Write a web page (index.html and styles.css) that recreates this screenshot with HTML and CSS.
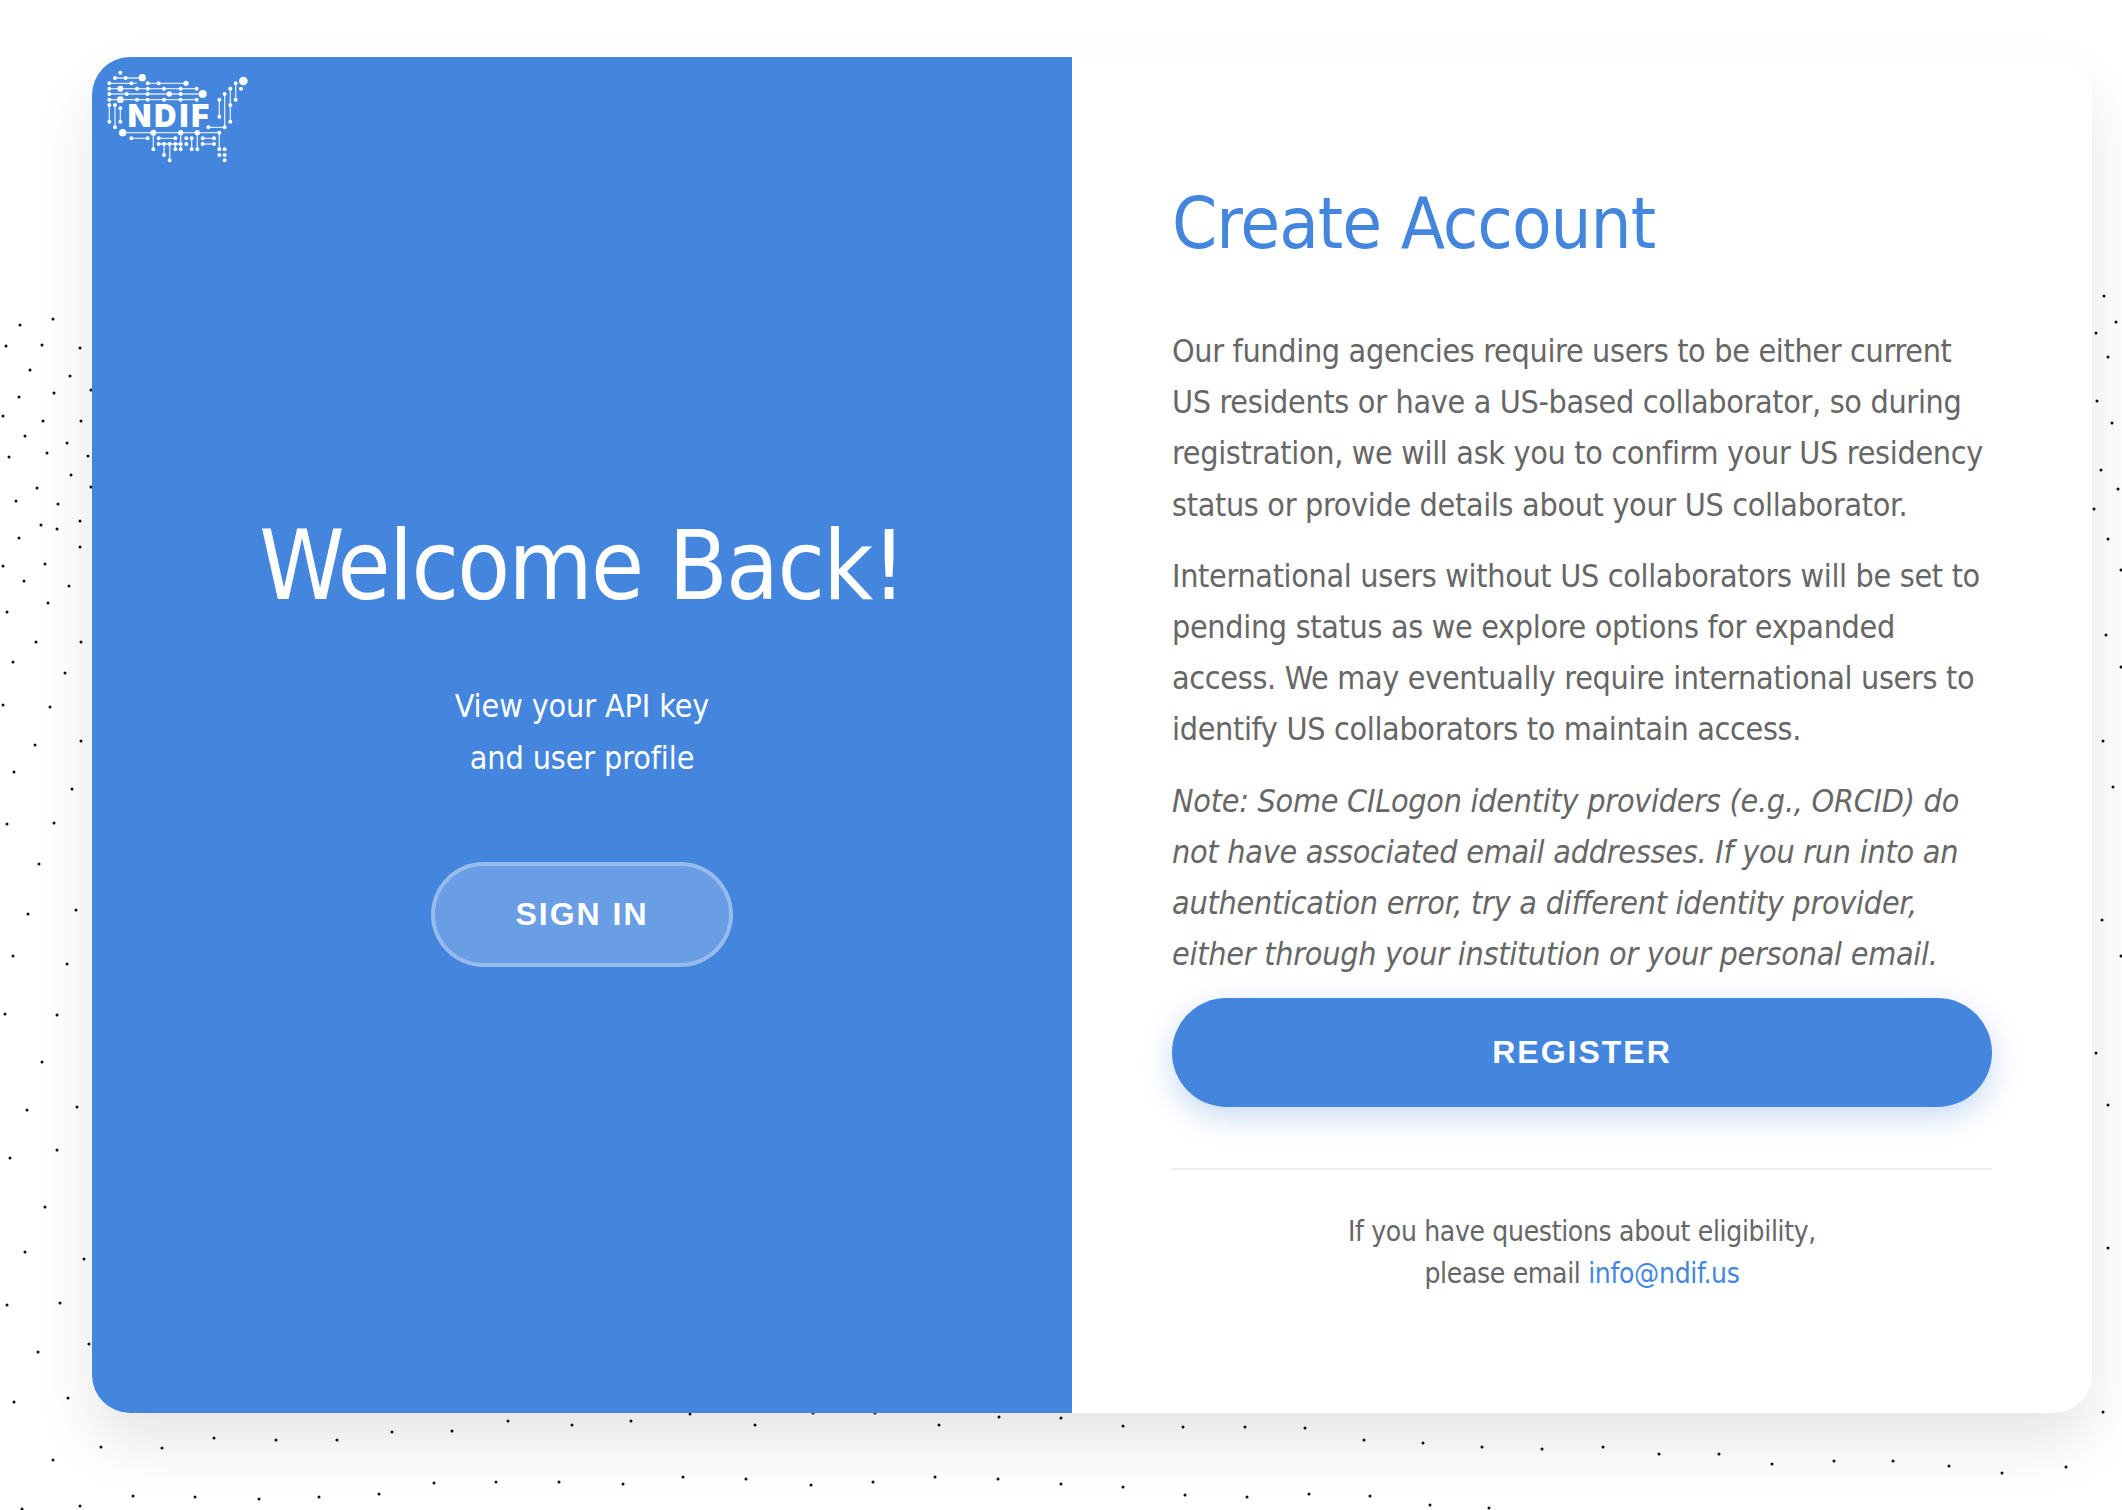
FILE: index.html
```html
<!DOCTYPE html>
<html lang="en">
<head>
<meta charset="utf-8">
<title>NDIF Login</title>
<link rel="stylesheet" href="styles.css">
</head>
<body>
<div class="stage">
  <svg class="particles" width="2122" height="1510" viewBox="0 0 2122 1510" aria-hidden="true">
    <path class="dots" d="M53 319h.01M20 325h.01M6 346h.01M42 345h.01M80 348h.01M30 370h.01M70 376h.01M19 397h.01M54 393h.01M91 390h.01M3 416h.01M43 421h.01M81 421h.01M25 436h.01M67 443h.01M9 457h.01M47 453h.01M88 456h.01M71 475h.01M37 488h.01M91 487h.01M16 501h.01M58 504h.01M80 521h.01M41 525h.01M57 529h.01M19 538h.01M80 547h.01M45 564h.01M3 566h.01M24 581h.01M69 586h.01M48 603h.01M7 612h.01M36 642h.01M81 642h.01M13 662h.01M65 673h.01M3 705h.01M50 707h.01M35 745h.01M81 741h.01M14 772h.01M72 789h.01M7 824h.01M54 823h.01M39 864h.01M76 910h.01M28 914h.01M13 956h.01M67 964h.01M5 1014h.01M57 1015h.01M42 1062h.01M77 1107h.01M27 1110h.01M57 1150h.01M10 1158h.01M45 1207h.01M25 1252h.01M84 1259h.01M60 1303h.01M7 1305h.01M38 1352h.01M89 1344h.01M14 1402h.01M68 1398h.01M101 1447h.01M53 1460h.01M162 1448h.01M214 1438h.01M276 1440h.01M337 1440h.01M392 1432h.01M452 1431h.01M508 1421h.01M572 1425h.01M631 1421h.01M690 1414h.01M133 1496h.01M195 1497h.01M259 1499h.01M319 1497h.01M379 1494h.01M434 1483h.01M496 1482h.01M559 1482h.01M623 1484h.01M683 1477h.01M22 1509h.01M80 1506h.01M755 1425h.01M813 1413h.01M875 1413h.01M939 1425h.01M999 1417h.01M1061 1418h.01M1123 1426h.01M1183 1427h.01M1245 1427h.01M1305 1428h.01M1364 1440h.01M746 1479h.01M811 1485h.01M873 1482h.01M935 1477h.01M998 1479h.01M1061 1484h.01M1123 1487h.01M1185 1495h.01M1247 1497h.01M1309 1494h.01M1370 1496h.01M1423 1443h.01M1482 1447h.01M1542 1449h.01M1603 1447h.01M1659 1454h.01M1719 1454h.01M1772 1464h.01M1834 1461h.01M1893 1461h.01M1949 1466h.01M2002 1473h.01M2066 1467h.01M2103 1412h.01M1430 1505h.01M1489 1508h.01M2104 296h.01M2116 322h.01M2096 333h.01M2108 357h.01M2097 401h.01M2112 423h.01M2101 470h.01M2118 489h.01M2094 509h.01M2108 539h.01M2121 570h.01M2106 635h.01M2121 667h.01M2103 741h.01M2113 787h.01M2102 920h.01M2121 956h.01M2096 1053h.01M2108 1105h.01M2108 1248h.01"/>
  </svg>

  <main class="card">
    <section class="panel-left">
      <svg class="logo" width="145" height="97" viewBox="45 54 435 291" role="img" aria-label="NDIF logo">
        <g class="logo-lines">
          <path d="M75 84H157M58 100H140M173 100H288M58 116H320M58 132H338M58 149H320"/>
          <path d="M58 165V215M75 165V232M91 175V215"/>
          <path d="M437 100V149M421 116V215M404 132V232M388 149V200M355 232H404"/>
          <path d="M98 248H388M124 265H173M190 248V298M206 265H256M206 282H272M222 282V315M239 282V331M256 282V298M272 248V298M305 265V298M322 248V298M338 265H372M338 282H372M388 248V298"/>
        </g>
        <path class="logo-dots" d="M91 68h.01M75 84h.01M107 84h.01M58 100h.01M124 100h.01M173 100h.01M206 100h.01M58 116h.01M141 116h.01M173 116h.01M222 116h.01M272 116h.01M320 116h.01M58 132h.01M110 132h.01M173 132h.01M272 132h.01M58 149h.01M141 149h.01M173 149h.01M222 149h.01M272 149h.01M320 149h.01M58 165h.01M58 215h.01M75 165h.01M75 232h.01M91 175h.01M91 215h.01M453 116h.01M437 100h.01M437 149h.01M421 116h.01M421 165h.01M421 215h.01M404 132h.01M404 232h.01M388 149h.01M388 200h.01M355 232h.01M388 248h.01M124 265h.01M173 265h.01M190 298h.01M206 265h.01M256 265h.01M206 282h.01M222 282h.01M239 282h.01M256 282h.01M272 282h.01M222 315h.01M239 331h.01M256 298h.01M272 298h.01M289 265h.01M289 282h.01M305 265h.01M305 298h.01M322 298h.01M338 265h.01M372 265h.01M338 282h.01M372 282h.01M388 298h.01M404 298h.01M388 315h.01M404 315h.01M404 331h.01"/>
        <g class="logo-nodes">
          <circle cx="157" cy="83" r="11"/><circle cx="288" cy="100" r="8"/><circle cx="91" cy="116" r="9"/>
          <circle cx="238" cy="132" r="8"/><circle cx="338" cy="132" r="12"/><circle cx="91" cy="149" r="10"/>
          <circle cx="460" cy="93" r="13"/><circle cx="98" cy="248" r="11"/><circle cx="190" cy="248" r="9"/>
          <circle cx="272" cy="248" r="8"/><circle cx="322" cy="248" r="8"/>
        </g>
        <text class="logo-text" x="240" y="232" text-anchor="middle">NDIF</text>
      </svg>
      <h1 class="welcome">Welcome Back!</h1>
      <p class="welcome-sub">View your API key<br>and user profile</p>
      <button class="btn btn-ghost" type="button">SIGN IN</button>
    </section>

    <section class="panel-right">
      <h2 class="title">Create Account</h2>
      <p class="copy">Our funding agencies require users to be either current US residents or have a US-based collaborator, so during registration, we will ask you to confirm your US residency status or provide details about your US collaborator.</p>
      <p class="copy">International users without US collaborators will be set to pending status as we explore options for expanded access. We may eventually require international users to identify US collaborators to maintain access.</p>
      <p class="copy copy-note">Note: Some CILogon identity providers (e.g., ORCID) do not have associated email addresses. If you run into an authentication error, try a different identity provider, either through your institution or your personal email.</p>
      <button class="btn btn-solid" type="button">REGISTER</button>
      <div class="help">
        <p class="help-text">If you have questions about eligibility,<br>please email <a class="help-link" href="#">info@ndif.us</a></p>
      </div>
    </section>
  </main>
</div>
</body>
</html>
```
FILE: styles.css
```css
* { box-sizing: border-box; }

html, body {
  margin: 0;
  padding: 0;
  background: #fff;
}

body {
  font-family: "DejaVu Sans Condensed", "DejaVu Sans", sans-serif;
  font-stretch: condensed;
  color: #666;
}

.stage {
  position: relative;
  width: 2122px;
  height: 1510px;
  padding: 57px 0 0 92px;
  overflow: hidden;
}

.particles {
  position: absolute;
  left: 0;
  top: 0;
}

.dots {
  fill: none;
  stroke: #111;
  stroke-width: 3px;
  stroke-linecap: round;
}

.card {
  position: relative;
  display: flex;
  width: 2000px;
  height: 1356px;
  border-radius: 38px;
  background: #fff;
  box-shadow: 0 30px 60px rgba(0, 0, 0, 0.1);
  overflow: hidden;
}

.panel-left {
  position: relative;
  flex: 0 0 980px;
  display: flex;
  flex-direction: column;
  align-items: center;
  justify-content: center;
  padding-top: 1px;
  background: #4486de;
  color: #fff;
  text-align: center;
}

.logo {
  position: absolute;
  left: 13px;
  top: 11px;
}

.logo-lines path {
  fill: none;
  stroke: #fff;
  stroke-width: 4;
  stroke-opacity: 0.8;
}

.logo-dots {
  fill: none;
  stroke: #fff;
  stroke-width: 12;
  stroke-linecap: round;
}

.logo-nodes circle { fill: #fff; }

.logo-text {
  font-family: Inter, "Liberation Sans", sans-serif;
  font-stretch: normal;
  font-weight: 900;
  font-size: 92px;
  letter-spacing: 9px;
  fill: #fff;
}

.welcome {
  margin: 0 0 52px;
  font-size: 96px;
  line-height: 125px;
  font-weight: 400;
  letter-spacing: -1.6px;
}

.welcome-sub {
  margin: 0 0 78px;
  font-size: 32px;
  line-height: 51.2px;
  letter-spacing: -0.1px;
}

.btn {
  display: block;
  font-family: "Liberation Sans", Arial, sans-serif;
  font-stretch: normal;
  font-size: 32px;
  font-weight: 700;
  letter-spacing: 2px;
  color: #fff;
  border-radius: 60px;
  padding: 0;
}

.btn-ghost {
  width: 302px;
  height: 105px;
  background: rgba(255, 255, 255, 0.2);
  border: 4px solid rgba(255, 255, 255, 0.3);
}

.btn-solid {
  width: 820px;
  height: 109px;
  flex: none;
  background: #4486de;
  border: 0;
  box-shadow: 0 10px 30px rgba(68, 134, 222, 0.3);
}

.panel-right {
  flex: 1;
  display: flex;
  flex-direction: column;
  padding: 119px 100px 0;
}

.title {
  margin: 0 0 56px;
  font-size: 72px;
  line-height: 94px;
  font-weight: 400;
  color: #4486de;
  letter-spacing: -1px;
}

.copy {
  margin: 0 0 20px;
  font-size: 32px;
  line-height: 51.2px;
  color: #666;
  letter-spacing: -0.32px;
}

.copy-note {
  margin-bottom: 18px;
  font-style: italic;
  letter-spacing: -0.25px;
}

.help {
  margin-top: 61px;
  padding-top: 41px;
  border-top: 2px solid #eee;
  text-align: center;
}

.help-text {
  margin: 0;
  font-size: 28px;
  line-height: 42px;
  color: #666;
  letter-spacing: -0.33px;
}

.help-link {
  color: #4486de;
  text-decoration: none;
}
```
